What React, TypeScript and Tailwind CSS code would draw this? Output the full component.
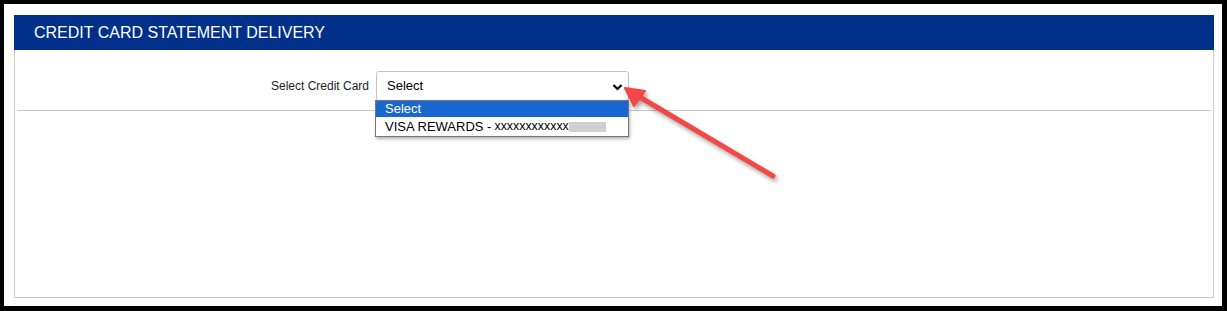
import React from "react";

export default function App() {
  const font = { fontFamily: '"Liberation Sans", Arial, sans-serif' };

  return (
    <div className="relative h-[311px] w-[1227px] bg-black pt-[4px] pl-[4px] pr-[5px] pb-[5px]" style={font}>
      <div className="flex h-full flex-col bg-white pt-[11px] pl-[10px] pr-[8px] pb-[8px]">
        {/* Panel */}
        <div className="flex flex-1 flex-col">
          <div className="flex h-[35px] items-center bg-[#00308a] pl-[20px] text-[16px] text-white">
            CREDIT CARD STATEMENT DELIVERY
          </div>
          <div className="flex-1 border-x border-b border-[#cccccc]">
            <div className="flex items-center pt-[21px]">
              <div className="w-[354px] text-right text-[12px] text-[#222]">Select Credit Card</div>
              <div className="relative ml-[7px]">
                <div className="flex h-[30px] w-[253px] items-center justify-between rounded-[3px] border border-[#c4c4c4] bg-white pl-[10px] pr-[4px] text-[13px] text-black">
                  <span>Select</span>
                  <svg width="13" height="12" viewBox="0 0 13 12" className="mt-[1px]">
                    <path d="M2.5 4 L6.5 8 L10.5 4" fill="none" stroke="#000" strokeWidth="2.2" />
                  </svg>
                </div>
                {/* Open option list */}
                <div className="absolute left-[-1px] top-[29px] z-10 w-[254px] border border-[#767676] bg-white text-[13px] shadow-[1px_2px_3px_rgba(0,0,0,0.3)]">
                  <div className="flex h-[16px] items-center bg-[#1a67d2] pl-[9px] text-white">Select</div>
                  <div className="flex h-[19px] items-center pl-[9px] text-black">
                    <span>VISA REWARDS - </span>
                    <span className="ml-[3px] text-[12.4px]">xxxxxxxxxxxx</span>
                    <span className="h-[10px] w-[37px] bg-[#d0d0d0]" />
                  </div>
                </div>
              </div>
            </div>
            <div className="mx-[2px] mt-[9px] border-t border-[#cccccc]" />
          </div>
        </div>
      </div>

      {/* Annotation arrow */}
      <svg className="pointer-events-none absolute left-0 top-0" width="1227" height="311" style={{ filter: "drop-shadow(2px 3px 2px rgba(0,0,0,0.35))" }}>
        <line x1="773" y1="176" x2="638" y2="96" stroke="#f24848" strokeWidth="5" strokeLinecap="round" />
        <polygon points="625,88 645,91 634,106" fill="#f24848" stroke="#f24848" strokeWidth="2" strokeLinejoin="round" />
      </svg>
    </div>
  );
}
